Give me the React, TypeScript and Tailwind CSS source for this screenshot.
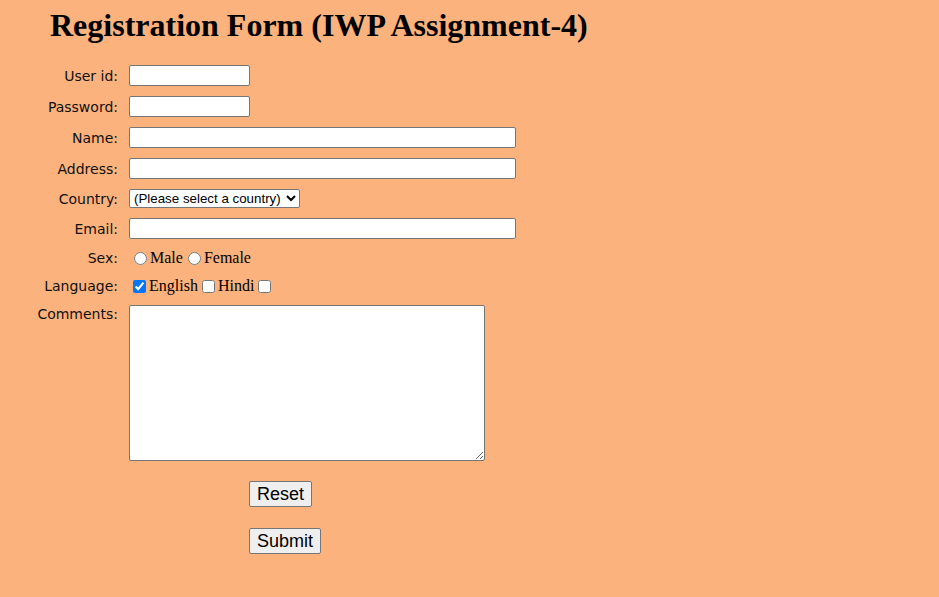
import React from "react";

const labelCls =
  "w-[118px] shrink-0 text-right font-['DejaVu_Sans','Verdana',sans-serif] text-[14px] leading-[16px] text-[#111]";
const inputCls =
  "h-[21px] border border-[#767676] rounded-[2px] bg-white px-[2px] text-[13px] font-['Liberation_Sans',sans-serif] outline-none";

function Row({ label, children }: { label: string; children: React.ReactNode }) {
  return (
    <div className="flex items-center">
      <label className={labelCls}>{label}</label>
      <div className="ml-[11px] flex items-center">{children}</div>
    </div>
  );
}

export default function App() {
  return (
    <div className="min-h-[597px] w-full bg-[#fbb27d] font-['Liberation_Serif',serif] text-black">
      <h1 className="pl-[50px] pt-[7px] h-[43px] text-[32px] leading-[36px] font-bold font-['Liberation_Serif',serif]">
        Registration Form (IWP Assignment-4)
      </h1>
      <form className="mt-[22px] flex flex-col gap-[10px]" onSubmit={(e) => e.preventDefault()}>
        <Row label="User id:">
          <input type="text" className={`${inputCls} w-[121px]`} />
        </Row>
        <Row label="Password:">
          <input type="password" className={`${inputCls} w-[121px]`} />
        </Row>
        <Row label="Name:">
          <input type="text" className={`${inputCls} w-[387px]`} />
        </Row>
        <Row label="Address:">
          <input type="text" className={`${inputCls} w-[387px]`} />
        </Row>
        <Row label="Country:">
          <select
            className="h-[19px] w-[171px] border border-[#767676] rounded-[2px] bg-white text-[13.33px] leading-[15px] font-['Liberation_Sans',Arial,sans-serif] text-black"
            defaultValue=""
          >
            <option value="">(Please select a country)</option>
            <option value="in">India</option>
            <option value="us">United States</option>
          </select>
        </Row>
        <Row label="Email:">
          <input type="email" className={`${inputCls} w-[387px]`} />
        </Row>
        <div className="flex items-center h-[18px]">
          <label className={labelCls}>Sex:</label>
          <div className="ml-[11px] text-[16px] leading-[18px] font-['Liberation_Serif',serif] whitespace-nowrap">
            <input type="radio" name="sex" className="m-[3px_3px_0_5px] align-[-2px]" />
            Male
            <input type="radio" name="sex" className="m-[3px_3px_0_5px] align-[-2px]" />
            Female
          </div>
        </div>
        <div className="flex items-center h-[18px]">
          <label className={labelCls}>Language:</label>
          <div className="ml-[11px] text-[16px] leading-[18px] font-['Liberation_Serif',serif] whitespace-nowrap">
            <input type="checkbox" defaultChecked className="m-[3px_3px_3px_4px] align-[-2px]" />
            English
            <input type="checkbox" className="m-[3px_3px_3px_4px] align-[-2px]" />
            Hindi
            <input type="checkbox" className="m-[3px_3px_3px_4px] align-[-2px]" />
          </div>
        </div>
        <div className="flex items-start">
          <label className={`${labelCls} pt-[1px]`}>Comments:</label>
          <textarea className="ml-[11px] h-[156px] w-[356px] border border-[#767676] rounded-[2px] bg-white p-[2px] text-[13px] font-['Liberation_Mono',monospace] outline-none" />
        </div>
        <div className="flex flex-col items-start gap-[21px] pl-[249px] mt-[10px]">
          <button
            type="reset"
            className="h-[26px] border border-[#767676] rounded-[2px] bg-[#efefef] px-[7px] text-[18px] leading-[20px] font-['Liberation_Sans',Arial,sans-serif] text-black"
          >
            Reset
          </button>
          <button
            type="submit"
            className="h-[26px] border border-[#767676] rounded-[2px] bg-[#efefef] px-[7px] text-[18px] leading-[20px] font-['Liberation_Sans',Arial,sans-serif] text-black"
          >
            Submit
          </button>
        </div>
      </form>
    </div>
  );
}
